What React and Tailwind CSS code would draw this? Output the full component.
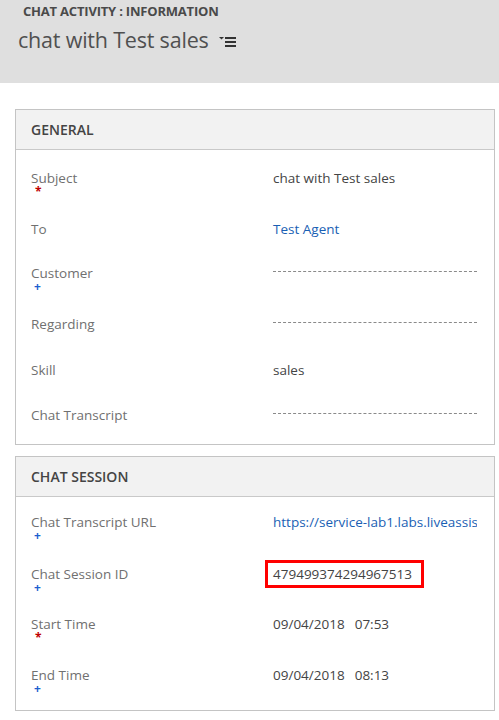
import React from "react";

const font = { fontFamily: '"Open Sans", "Noto Sans", sans-serif' };

function Row({ label, marker, h, children }) {
  return (
    <div className="flex" style={{ height: h }}>
      <div className="w-[257px] pl-[15px]">
        <div className="text-[13.5px] leading-[18px] text-[#707070]">{label}</div>
        {marker === "req" && (
          <div className="text-[#c00000] text-[12px] leading-[9px] pl-[4px] font-bold">*</div>
        )}
        {marker === "rec" && (
          <div className="text-[#1c5fcf] text-[12px] leading-[9px] pl-[3px] font-bold">+</div>
        )}
      </div>
      <div className="w-[204px] whitespace-nowrap">{children}</div>
    </div>
  );
}

function Dash() {
  return <div className="mt-[7px] w-[204px] border-t border-dashed border-[#8a8a8a]" />;
}

function Val({ children, cls = "" }) {
  return <div className={"text-[13.5px] leading-[18px] text-[#444] " + cls}>{children}</div>;
}

export default function App() {
  return (
    <div className="w-[499px] h-[720px] bg-white overflow-hidden" style={font}>
      <div className="h-[83px] bg-[#dfdfdf] pl-[23px] pt-[2px]">
        <div className="text-[13px] font-bold text-[#4a4a4a] leading-[18px] tracking-[-0.2px]">
          CHAT ACTIVITY : INFORMATION
        </div>
        <div className="flex items-center -ml-[5px] mt-[5px]">
          <span className="text-[21.5px] text-[#505050] leading-[30px] tracking-[-0.2px]">chat with Test sales</span>
          <svg width="18" height="12" viewBox="0 0 18 12" className="ml-[10px] mt-[3px]">
            <polygon points="0,1 5,1 2.5,3.5" fill="#333" />
            <rect x="6" y="1" width="11" height="2" fill="#333" />
            <rect x="6" y="5" width="11" height="2" fill="#333" />
            <rect x="6" y="9" width="11" height="2" fill="#333" />
          </svg>
        </div>
      </div>

      <div className="pl-[15px] pr-[4px] pt-[26px]">
        <div className="border border-[#c4c4c4] w-[480px]">
          <div className="h-[40px] bg-[#f2f2f2] border-b border-[#c9c9c9] flex items-center pl-[15px]">
            <span className="text-[14px] font-semibold text-[#444]">GENERAL</span>
          </div>
          <div className="pt-[19px]">
            <Row label="Subject" marker="req" h={51}><Val>chat with Test sales</Val></Row>
            <Row label="To" h={44}><Val cls="!text-[#1a5fb4]">Test Agent</Val></Row>
            <Row label="Customer" marker="rec" h={51}><Dash /></Row>
            <Row label="Regarding" h={46}><Dash /></Row>
            <Row label="Skill" h={45}><Val>sales</Val></Row>
            <Row label="Chat Transcript" h={38}><Dash /></Row>
          </div>
        </div>

        <div className="border border-[#c4c4c4] w-[480px] mt-[11px]">
          <div className="h-[40px] bg-[#f2f2f2] border-b border-[#c9c9c9] flex items-center pl-[15px]">
            <span className="text-[14px] font-semibold text-[#444]">CHAT SESSION</span>
          </div>
          <div className="pt-[16px]">
            <Row label="Chat Transcript URL" marker="rec" h={52}>
              <div className="overflow-hidden">
                <Val cls="!text-[#1a5fb4]">https://service-lab1.labs.liveassistfor365.com</Val>
              </div>
            </Row>
            <Row label="Chat Session ID" marker="rec" h={50}>
              <div className="relative">
                <Val>479499374294967513</Val>
                <div className="absolute left-[-8px] top-[-5px] w-[159px] h-[28px] border-[3px] border-[#ff0000]" />
              </div>
            </Row>
            <Row label="Start Time" marker="req" h={51}>
              <Val>09/04/2018<span className="ml-[10px]">07:53</span></Val>
            </Row>
            <Row label="End Time" marker="rec" h={44}>
              <Val>09/04/2018<span className="ml-[10px]">08:13</span></Val>
            </Row>
          </div>
        </div>
      </div>
    </div>
  );
}
